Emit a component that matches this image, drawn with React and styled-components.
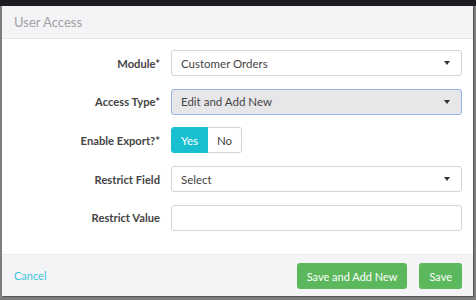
import React from "react";
import styled, { createGlobalStyle } from "styled-components";

const Global = createGlobalStyle`
  html, body { margin: 0; padding: 0; }
  body {
    width: 476px;
    height: 300px;
    overflow: hidden;
    background: #7d7d80;
    font-family: Lato, "Open Sans", Arial, sans-serif;
  }
`;

const Page = styled.div`
  width: 476px;
  height: 300px;
  display: flex;
  flex-direction: column;
`;

const TopStrip = styled.div`
  height: 6px;
  background: #1c1c21;
  flex: none;
`;

const Stage = styled.div`
  padding: 0 3px 0 2px;
`;

const Modal = styled.div`
  height: 290px;
  background: #fff;
  display: flex;
  flex-direction: column;
  box-shadow: 1px 1px 0 #555;
`;

const Header = styled.div`
  height: 32px;
  background: #f4f3f6;
  border-bottom: 1px solid #e2e1e4;
  display: flex;
  align-items: center;
  padding-left: 12px;
  font-size: 13px;
  color: #a2a1a5;
`;

const Body = styled.div`
  flex: 1;
  padding: 11px 11px 0 0;
  display: grid;
  grid-template-columns: 158px 1fr;
  grid-auto-rows: 26px;
  row-gap: 12.7px;
  column-gap: 11px;
  align-content: start;
`;

const Label = styled.label`
  font-size: 11.2px;
  font-weight: 700;
  color: #444;
  display: flex;
  align-items: center;
  justify-content: flex-end;
`;

const Field = styled.div`
  box-sizing: border-box;
  height: 26px;
  border: 1px solid ${(p) => (p.$focus ? "#93b4e8" : "#d4d3d6")};
  background: ${(p) => (p.$focus ? "#e7e6e9" : "#fff")};
  border-radius: 3px;
  display: flex;
  align-items: center;
  padding: 0 9px;
  font-size: 11.5px;
  color: #444;
`;

const Value = styled.span`
  flex: 1;
`;

const Caret = styled.span`
  width: 0;
  height: 0;
  border-left: 3.5px solid transparent;
  border-right: 3.5px solid transparent;
  border-top: 4px solid #333;
  margin-right: 2px;
`;

const Toggle = styled.div`
  display: flex;
`;

const ToggleBtn = styled.div`
  box-sizing: border-box;
  height: 26px;
  width: ${(p) => p.$w}px;
  display: flex;
  align-items: center;
  justify-content: center;
  font-size: 11.5px;
  background: ${(p) => (p.$on ? "#18bfd1" : "#fff")};
  color: ${(p) => (p.$on ? "#fff" : "#444")};
  border: 1px solid ${(p) => (p.$on ? "#18bfd1" : "#d4d3d6")};
  border-radius: ${(p) => (p.$first ? "3px 0 0 3px" : "0 3px 3px 0")};
  ${(p) => (!p.$first ? "border-left: none;" : "")}
`;

const Footer = styled.div`
  height: 41px;
  background: #f4f3f6;
  border-top: 1px solid #ebeaed;
  display: flex;
  align-items: center;
  padding: 0 11px 0 12px;
  gap: 12px;
`;

const Link = styled.span`
  font-size: 11px;
  color: #3ec6d8;
  margin-right: auto;
`;

const Button = styled.div`
  height: 26px;
  padding: 0 10px;
  background: #5cb85c;
  color: #fff;
  font-size: 11px;
  border-radius: 3px;
  display: flex;
  align-items: center;
  margin-top: 1px;
`;

export default function App() {
  return (
    <>
      <Global />
      <Page>
        <TopStrip />
        <Stage>
          <Modal>
            <Header>User Access</Header>
            <Body>
              <Label>Module*</Label>
              <Field>
                <Value>Customer Orders</Value>
                <Caret />
              </Field>
              <Label>Access Type*</Label>
              <Field $focus>
                <Value>Edit and Add New</Value>
                <Caret />
              </Field>
              <Label>Enable Export?*</Label>
              <Toggle>
                <ToggleBtn $on $first $w={37}>Yes</ToggleBtn>
                <ToggleBtn $w={34}>No</ToggleBtn>
              </Toggle>
              <Label>Restrict Field</Label>
              <Field>
                <Value>Select</Value>
                <Caret />
              </Field>
              <Label>Restrict Value</Label>
              <Field />
            </Body>
            <Footer>
              <Link>Cancel</Link>
              <Button>Save and Add New</Button>
              <Button>Save</Button>
            </Footer>
          </Modal>
        </Stage>
      </Page>
    </>
  );
}
